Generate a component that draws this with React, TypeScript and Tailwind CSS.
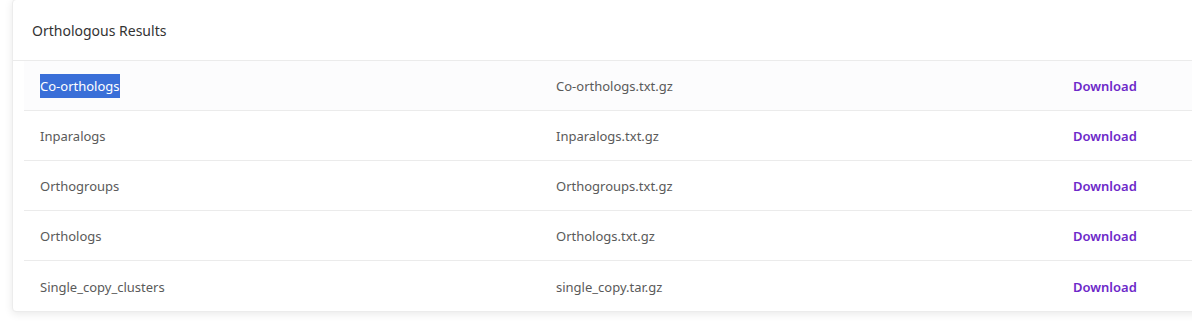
import React from "react";

const rows = [
  { name: "Co-orthologs", file: "Co-orthologs.txt.gz" },
  { name: "Inparalogs", file: "Inparalogs.txt.gz" },
  { name: "Orthogroups", file: "Orthogroups.txt.gz" },
  { name: "Orthologs", file: "Orthologs.txt.gz" },
  { name: "Single_copy_clusters", file: "single_copy.tar.gz" },
];

export default function App() {
  return (
    <div
      className="w-[1192px] h-[327px] overflow-hidden bg-white"
      style={{ fontFamily: '"Noto Sans", "Open Sans", sans-serif' }}
    >
      <div className="ml-[12px] w-[1200px] -mt-[1px] bg-white rounded-[4px] border border-[#ececec] shadow-[0_2px_8px_rgba(0,0,0,0.09)]">
        <div className="h-[61px] flex items-center pl-[19px] border-b border-[#ebebeb] text-[14px] text-[#333]">
          Orthologous Results
        </div>
        <div className="pl-[11px]">
          {rows.map((r, i) => (
            <div
              key={r.name}
              className={`h-[50px] flex items-center pt-[3px] text-[13px] text-[#5a5a5a] ${
                i < rows.length - 1 ? "border-b border-[#ebebeb]" : ""
              } ${i === 0 ? "bg-[#fcfcfd]" : ""}`}
            >
              <div className="w-[532px] pl-[16px]">
                {i === 0 ? (
                  <span className="bg-[#3a6fd8] text-white py-[3px]">{r.name}</span>
                ) : (
                  r.name
                )}
              </div>
              <div className="w-[517px]">{r.file}</div>
              <div className="font-semibold text-[#6d28c9]">Download</div>
            </div>
          ))}
        </div>
      </div>
    </div>
  );
}
